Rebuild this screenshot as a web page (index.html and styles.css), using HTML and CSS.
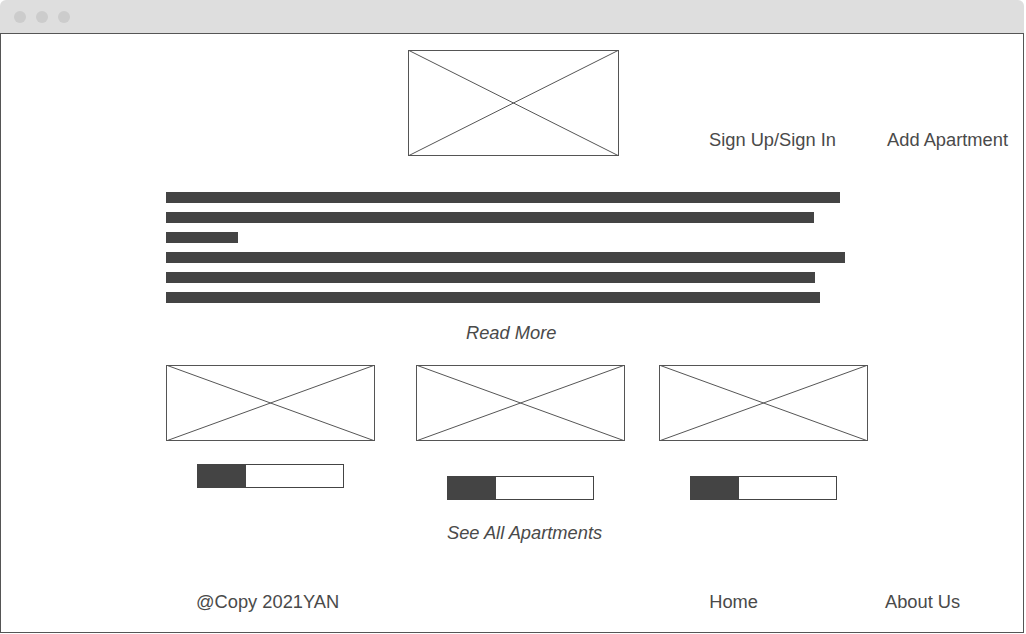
FILE: index.html
```html
<!DOCTYPE html>
<html lang="en">
<head>
  <meta charset="UTF-8" />
  <meta name="viewport" content="width=device-width, initial-scale=1.0" />
  <title>Apartments Wireframe</title>
  <link rel="stylesheet" href="styles.css">
</head>
<body>
  <div class="window">
    <div class="titlebar">
      <span class="dot"></span>
      <span class="dot"></span>
      <span class="dot"></span>
    </div>

    <div class="page">
      <header class="top">
        <svg class="placeholder logo" viewBox="0 0 211 106" preserveAspectRatio="none">
          <rect x="0.5" y="0.5" width="210" height="105" />
          <line x1="0" y1="0" x2="211" y2="106" />
          <line x1="0" y1="106" x2="211" y2="0" />
        </svg>
        <nav class="nav">
          <a href="#">Sign Up/Sign In</a>
          <a href="#">Add Apartment</a>
        </nav>
      </header>

      <section class="intro">
        <div class="line" style="width: 674px"></div>
        <div class="line" style="width: 648px"></div>
        <div class="line" style="width: 72px"></div>
        <div class="line" style="width: 679px"></div>
        <div class="line" style="width: 649px"></div>
        <div class="line" style="width: 654px"></div>
        <a class="more" href="#">Read More</a>
      </section>

      <section class="cards">
        <div class="card card-first">
          <svg class="placeholder thumb" viewBox="0 0 209 76" preserveAspectRatio="none">
            <rect x="0.5" y="0.5" width="208" height="75" />
            <line x1="0" y1="0" x2="209" y2="76" />
            <line x1="0" y1="76" x2="209" y2="0" />
          </svg>
          <div class="slider"><span class="fill"></span></div>
        </div>
        <div class="card card-second">
          <svg class="placeholder thumb" viewBox="0 0 209 76" preserveAspectRatio="none">
            <rect x="0.5" y="0.5" width="208" height="75" />
            <line x1="0" y1="0" x2="209" y2="76" />
            <line x1="0" y1="76" x2="209" y2="0" />
          </svg>
          <div class="slider low"><span class="fill"></span></div>
        </div>
        <div class="card card-third">
          <svg class="placeholder thumb" viewBox="0 0 209 76" preserveAspectRatio="none">
            <rect x="0.5" y="0.5" width="208" height="75" />
            <line x1="0" y1="0" x2="209" y2="76" />
            <line x1="0" y1="76" x2="209" y2="0" />
          </svg>
          <div class="slider low"><span class="fill"></span></div>
        </div>
      </section>

      <a class="see-all" href="#">See All Apartments</a>

      <footer class="footer">
        <span class="copy">@Copy 2021YAN</span>
        <a class="home" href="#">Home</a>
        <a class="about" href="#">About Us</a>
      </footer>
    </div>
  </div>
</body>
</html>
```

FILE: styles.css
```css
body {
  margin: 0;
  background: #ffffff;
  font-family: "Liberation Sans", Arial, sans-serif;
  color: #4a4a4a;
}
a {
  color: inherit;
  text-decoration: none;
}
.window {
  width: 1024px;
  height: 634px;
  display: flex;
  flex-direction: column;
}
.titlebar {
  height: 33px;
  flex-shrink: 0;
  background: #dedede;
  border-radius: 6px 6px 0 0;
  display: flex;
  align-items: center;
  gap: 10px;
  padding-left: 14px;
  box-sizing: border-box;
}
.dot {
  width: 12px;
  height: 12px;
  border-radius: 50%;
  background: #cccccc;
}
.page {
  flex: 1;
  border: 1px solid #555555;
  margin-bottom: 1px;
  display: flex;
  flex-direction: column;
}

/* header */
.top {
  display: flex;
  align-items: flex-end;
  padding-top: 16px;
}
.placeholder {
  display: block;
  fill: none;
  stroke: #555555;
  stroke-width: 1;
}
.logo {
  width: 211px;
  height: 106px;
  margin-left: 407px;
}
.nav {
  display: flex;
  gap: 51px;
  margin-left: 90px;
  padding-bottom: 6px;
  font-size: 18.3px;
  line-height: 20px;
}

/* intro text */
.intro {
  margin-top: 36px;
  padding-left: 165px;
  display: flex;
  flex-direction: column;
}
.line {
  height: 11px;
  background: #444444;
  margin-bottom: 9px;
}
.more {
  align-self: flex-start;
  margin: 11px 0 0 300px;
  font-size: 18.3px;
  line-height: 20px;
  font-style: italic;
}

/* apartments */
.cards {
  display: flex;
  align-items: flex-start;
  margin-top: 22px;
  padding-left: 165px;
}
.card-second {
  margin-left: 41px;
}
.card-third {
  margin-left: 34px;
}
.thumb {
  width: 209px;
  height: 76px;
}
.slider {
  width: 147px;
  height: 24px;
  margin: 23px 0 0 31px;
  border: 1px solid #444444;
  box-sizing: border-box;
  display: flex;
}
.slider.low {
  margin-top: 35px;
}
.fill {
  width: 48px;
  background: #444444;
}
.see-all {
  align-self: flex-start;
  margin: 23px 0 0 446px;
  font-size: 18.3px;
  line-height: 20px;
  font-style: italic;
}

/* footer */
.footer {
  display: flex;
  margin-top: 49px;
  padding-left: 195px;
  font-size: 18.3px;
  line-height: 20px;
}
.home {
  margin-left: 370px;
}
.about {
  margin-left: 127px;
}
```
